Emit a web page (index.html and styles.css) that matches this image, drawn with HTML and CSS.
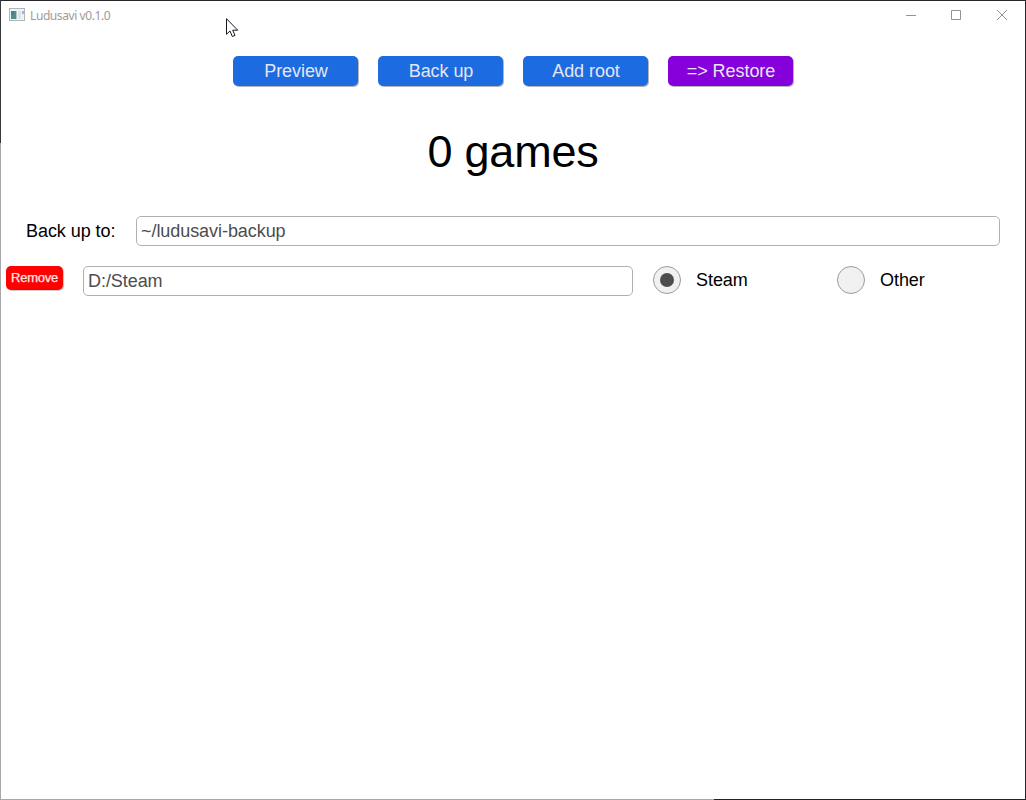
FILE: index.html
```html
<!DOCTYPE html>
<html lang="en">
<head>
<meta charset="utf-8">
<title>Ludusavi v0.1.0</title>
<link rel="stylesheet" href="styles.css">
</head>
<body>
<div class="window">
  <header class="titlebar">
    <svg class="app-icon" width="16" height="13" viewBox="0 0 16 13" shape-rendering="crispEdges">
      <rect x=".5" y=".5" width="15" height="12" fill="#f0f3f6" stroke="#b1b5b7"/>
      <rect x="2" y="3" width="5" height="8" fill="#4c9188"/>
      <rect x="2" y="3" width="3" height="4" fill="#467f94"/>
      <rect x="7" y="3" width="1" height="8" fill="#a9c8c6"/>
      <rect x="9" y="3" width="3" height="8" fill="#dce1eb"/>
      <rect x="13" y="3" width="2" height="3" fill="#9db6ce"/>
    </svg>
    <span class="title">Ludusavi v0.1.0</span>
    <div class="controls">
      <svg width="10" height="10" viewBox="0 0 10 10"><path d="M0 5.5H10"/></svg>
      <svg width="10" height="10" viewBox="0 0 10 10"><path d="M.5.5H9.5V9.5H.5Z"/></svg>
      <svg width="10" height="10" viewBox="0 0 10 10"><path d="M0 0L10 10M10 0L0 10"/></svg>
    </div>
  </header>
  <nav class="actions">
    <button class="btn">Preview</button>
    <button class="btn">Back up</button>
    <button class="btn">Add root</button>
    <button class="btn restore">=&gt; Restore</button>
  </nav>
  <h1 class="count">0 games</h1>
  <div class="target-row">
    <label class="target-label" for="target">Back up to:</label>
    <input class="field" id="target" value="~/ludusavi-backup">
  </div>
  <div class="root-row">
    <button class="remove">Remove</button>
    <input class="field root-path" value="D:/Steam" aria-label="Root">
    <label class="option"><span class="radio checked"></span>Steam</label>
    <label class="option"><span class="radio"></span>Other</label>
  </div>
  <i class="edge top"></i><i class="edge left"></i><i class="edge right"></i><i class="edge bottom"></i>
  <svg class="pointer" width="13" height="20" viewBox="0 0 13 20"><path d="M.5.7V16.3L4 13L6.3 18.5L9 17.4L6.7 12.2H11.7Z" fill="#fff" stroke="#17171f" stroke-width="1"/></svg>
</div>
</body>
</html>
```

FILE: styles.css
```css
* { box-sizing: border-box; }
body { margin: 0; font: 18px/20px "Liberation Sans", Arial, sans-serif; letter-spacing: -.06px; color: #000; background: #fff; }
button, input { font: inherit; letter-spacing: inherit; margin: 0; }
.window { position: relative; width: 1026px; height: 800px; overflow: hidden; }
.titlebar { display: flex; align-items: center; height: 31px; padding: 0 19px 0 9px; }
.app-icon { margin-bottom: 2px; }
.title { margin-left: 5px; font: 12px/16px "Noto Sans", sans-serif; letter-spacing: -.41px; color: #a09a98; padding-top: 1px; }
.controls { display: flex; gap: 35px; margin-left: auto; padding-bottom: 2px; }
.controls svg { fill: none; stroke: #929292; }
.controls svg:last-child { margin-left: 1px; }
.actions { display: flex; justify-content: center; gap: 20px; padding-top: 25px; }
.btn { width: 125px; height: 30px; padding: 0 0 0 1px; border: 0; border-radius: 5px; background: #1c6be1; color: #e6e6f2; box-shadow: 1px 1px 0 #b5b5b5; }
.restore { background: #8600dc; }
.count { margin: 41px 0 0; text-align: center; font-size: 45px; line-height: 50px; font-weight: 400; letter-spacing: -.25px; }
.target-row { display: flex; align-items: center; margin-top: 39px; padding: 0 26px; }
.target-label { width: 110px; }
.field { flex: 1; height: 30px; padding: 0 4px; border: 1px solid #b0b0b0; border-radius: 5px; background: #fff; color: #4d4d4d; }
.root-row { display: flex; align-items: flex-start; margin-top: 20px; padding-left: 6px; }
.remove { width: 57px; height: 24px; margin-right: 20px; padding: 0; border: 0; border-radius: 5px; background: #f00; color: #ffe6e6; font-size: 13px; letter-spacing: -.25px; -webkit-text-stroke: .25px #ffe6e6; box-shadow: 1px 1px 0 #c9c9c9; }
.root-path { flex: 0 0 550px; margin-right: 20px; }
.option { display: flex; align-items: center; gap: 15px; width: 184px; height: 28px; }
.radio { display: grid; place-items: center; width: 28px; height: 28px; border: 1px solid #999; border-radius: 50%; background: #f1f1f1; }
.checked::after { content: ""; width: 14px; height: 14px; border-radius: 50%; background: #4d4d4d; }
.edge { position: absolute; background: #2a272a; }
.top { inset: 0 0 auto 0; height: 1px; }
.left { inset: 0 auto 0 0; width: 1px; background: linear-gradient(#39363a 143px, #a8a8a8 143px); }
.right { inset: 0 0 0 auto; width: 1px; }
.bottom { inset: auto 0 0 0; height: 1px; background: linear-gradient(90deg, #a8a8a8 714px, #242125 714px); }
.pointer { position: absolute; left: 226px; top: 18px; }
```
